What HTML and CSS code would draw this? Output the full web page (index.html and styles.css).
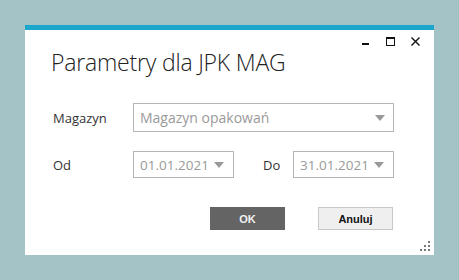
FILE: index.html
```html
<!DOCTYPE html>
<html lang="pl">
<head>
    <meta charset="UTF-8">
    <title>Parametry dla JPK MAG</title>

    <link rel="stylesheet" href="styles.css">
</head>
<body>

<div class="dialog">
    <div class="caption">
        <svg class="win-btns" width="60" height="9" viewBox="0 0 60 9">
            <rect x="1" y="6" width="7" height="2" fill="#111"/>
            <rect x="25.5" y="0.5" width="8" height="8" fill="none" stroke="#111" stroke-width="1"/>
            <rect x="25" y="0" width="9" height="2" fill="#111"/>
            <path d="M50.5 0.5 L58.5 8.5 M58.5 0.5 L50.5 8.5" stroke="#111" stroke-width="1.4"/>
        </svg>
    </div>

    <h1 class="title">Parametry dla JPK MAG</h1>

    <div class="form">
        <div class="row">
            <label class="lbl">Magazyn</label>
            <div class="combo combo-wide">
                <span class="val">Magazyn opakowań</span>
                <i class="arrow"></i>
            </div>
        </div>
        <div class="row row-dates">
            <label class="lbl">Od</label>
            <div class="combo combo-date">
                <span class="val">01.01.2021</span>
                <i class="arrow"></i>
            </div>
            <label class="lbl lbl-do">Do</label>
            <div class="combo combo-date">
                <span class="val">31.01.2021</span>
                <i class="arrow"></i>
            </div>
        </div>
    </div>

    <div class="buttons">
        <button class="btn btn-ok">OK</button>
        <button class="btn btn-cancel">Anuluj</button>
    </div>

    <div class="grip">
        <span></span><span></span><span></span><span></span><span></span><span></span>
    </div>
</div>

</body>
</html>
```

FILE: styles.css
```css
* {
    margin: 0;
    padding: 0;
    box-sizing: border-box;
}

body {
    background: #a3c3c7;
    font-family: "Open Sans", "Noto Sans", sans-serif;
    color: #222;
}

.dialog {
    position: relative;
    margin: 25px 0 0 25px;
    width: 409px;
    height: 230px;
    background: #fff;
    border-top: 5px solid #1ba7cc;
}

.caption {
    display: flex;
    justify-content: flex-end;
    padding: 7px 13px 0 0;
    height: 16px;
}

.win-btns {
    display: block;
}

.title {
    margin-left: 26px;
    font-size: 23px;
    font-weight: 300;
    line-height: 32px;
    letter-spacing: -0.2px;
    color: #222;
}

.form {
    margin-top: 25px;
    padding-left: 28px;
}

.row {
    display: flex;
    align-items: center;
}

.row-dates {
    margin-top: 19px;
}

.lbl {
    width: 80px;
    font-size: 13px;
    color: #333;
}

.lbl-do {
    width: 30px;
    margin-left: 29px;
}

.combo {
    display: flex;
    align-items: center;
    justify-content: space-between;
    border: 1px solid #b5b5b5;
    padding: 0 8px 0 6px;
    font-size: 14px;
    color: #9a9a9a;
}

.combo-wide {
    width: 261px;
    height: 29px;
}

.combo-date {
    width: 101px;
    height: 27px;
    padding-right: 9px;
    font-size: 13.5px;
}

.arrow {
    width: 0;
    height: 0;
    border-left: 5px solid transparent;
    border-right: 5px solid transparent;
    border-top: 6px solid #999;
}

.buttons {
    display: flex;
    justify-content: flex-end;
    gap: 33px;
    margin-top: 29px;
    padding-right: 41px;
}

.btn {
    width: 75px;
    height: 23px;
    font-family: "Liberation Sans", Arial, sans-serif;
    font-size: 11px;
    font-weight: bold;
}

.btn-ok {
    background: #646464;
    border: 1px solid #646464;
    color: #f2f2f2;
}

.btn-cancel {
    background: #efefef;
    border: 1px solid #c8c8c8;
    color: #111;
}

.grip {
    position: absolute;
    right: 4px;
    bottom: 4px;
    width: 10px;
    height: 10px;
}

.grip span {
    position: absolute;
    width: 2px;
    height: 2px;
    background: #777;
}

.grip span:nth-child(1) { right: 0; top: 0; }
.grip span:nth-child(2) { right: 0; top: 4px; }
.grip span:nth-child(3) { right: 0; top: 8px; }
.grip span:nth-child(4) { right: 4px; top: 4px; }
.grip span:nth-child(5) { right: 4px; top: 8px; }
.grip span:nth-child(6) { right: 8px; top: 8px; }
```
